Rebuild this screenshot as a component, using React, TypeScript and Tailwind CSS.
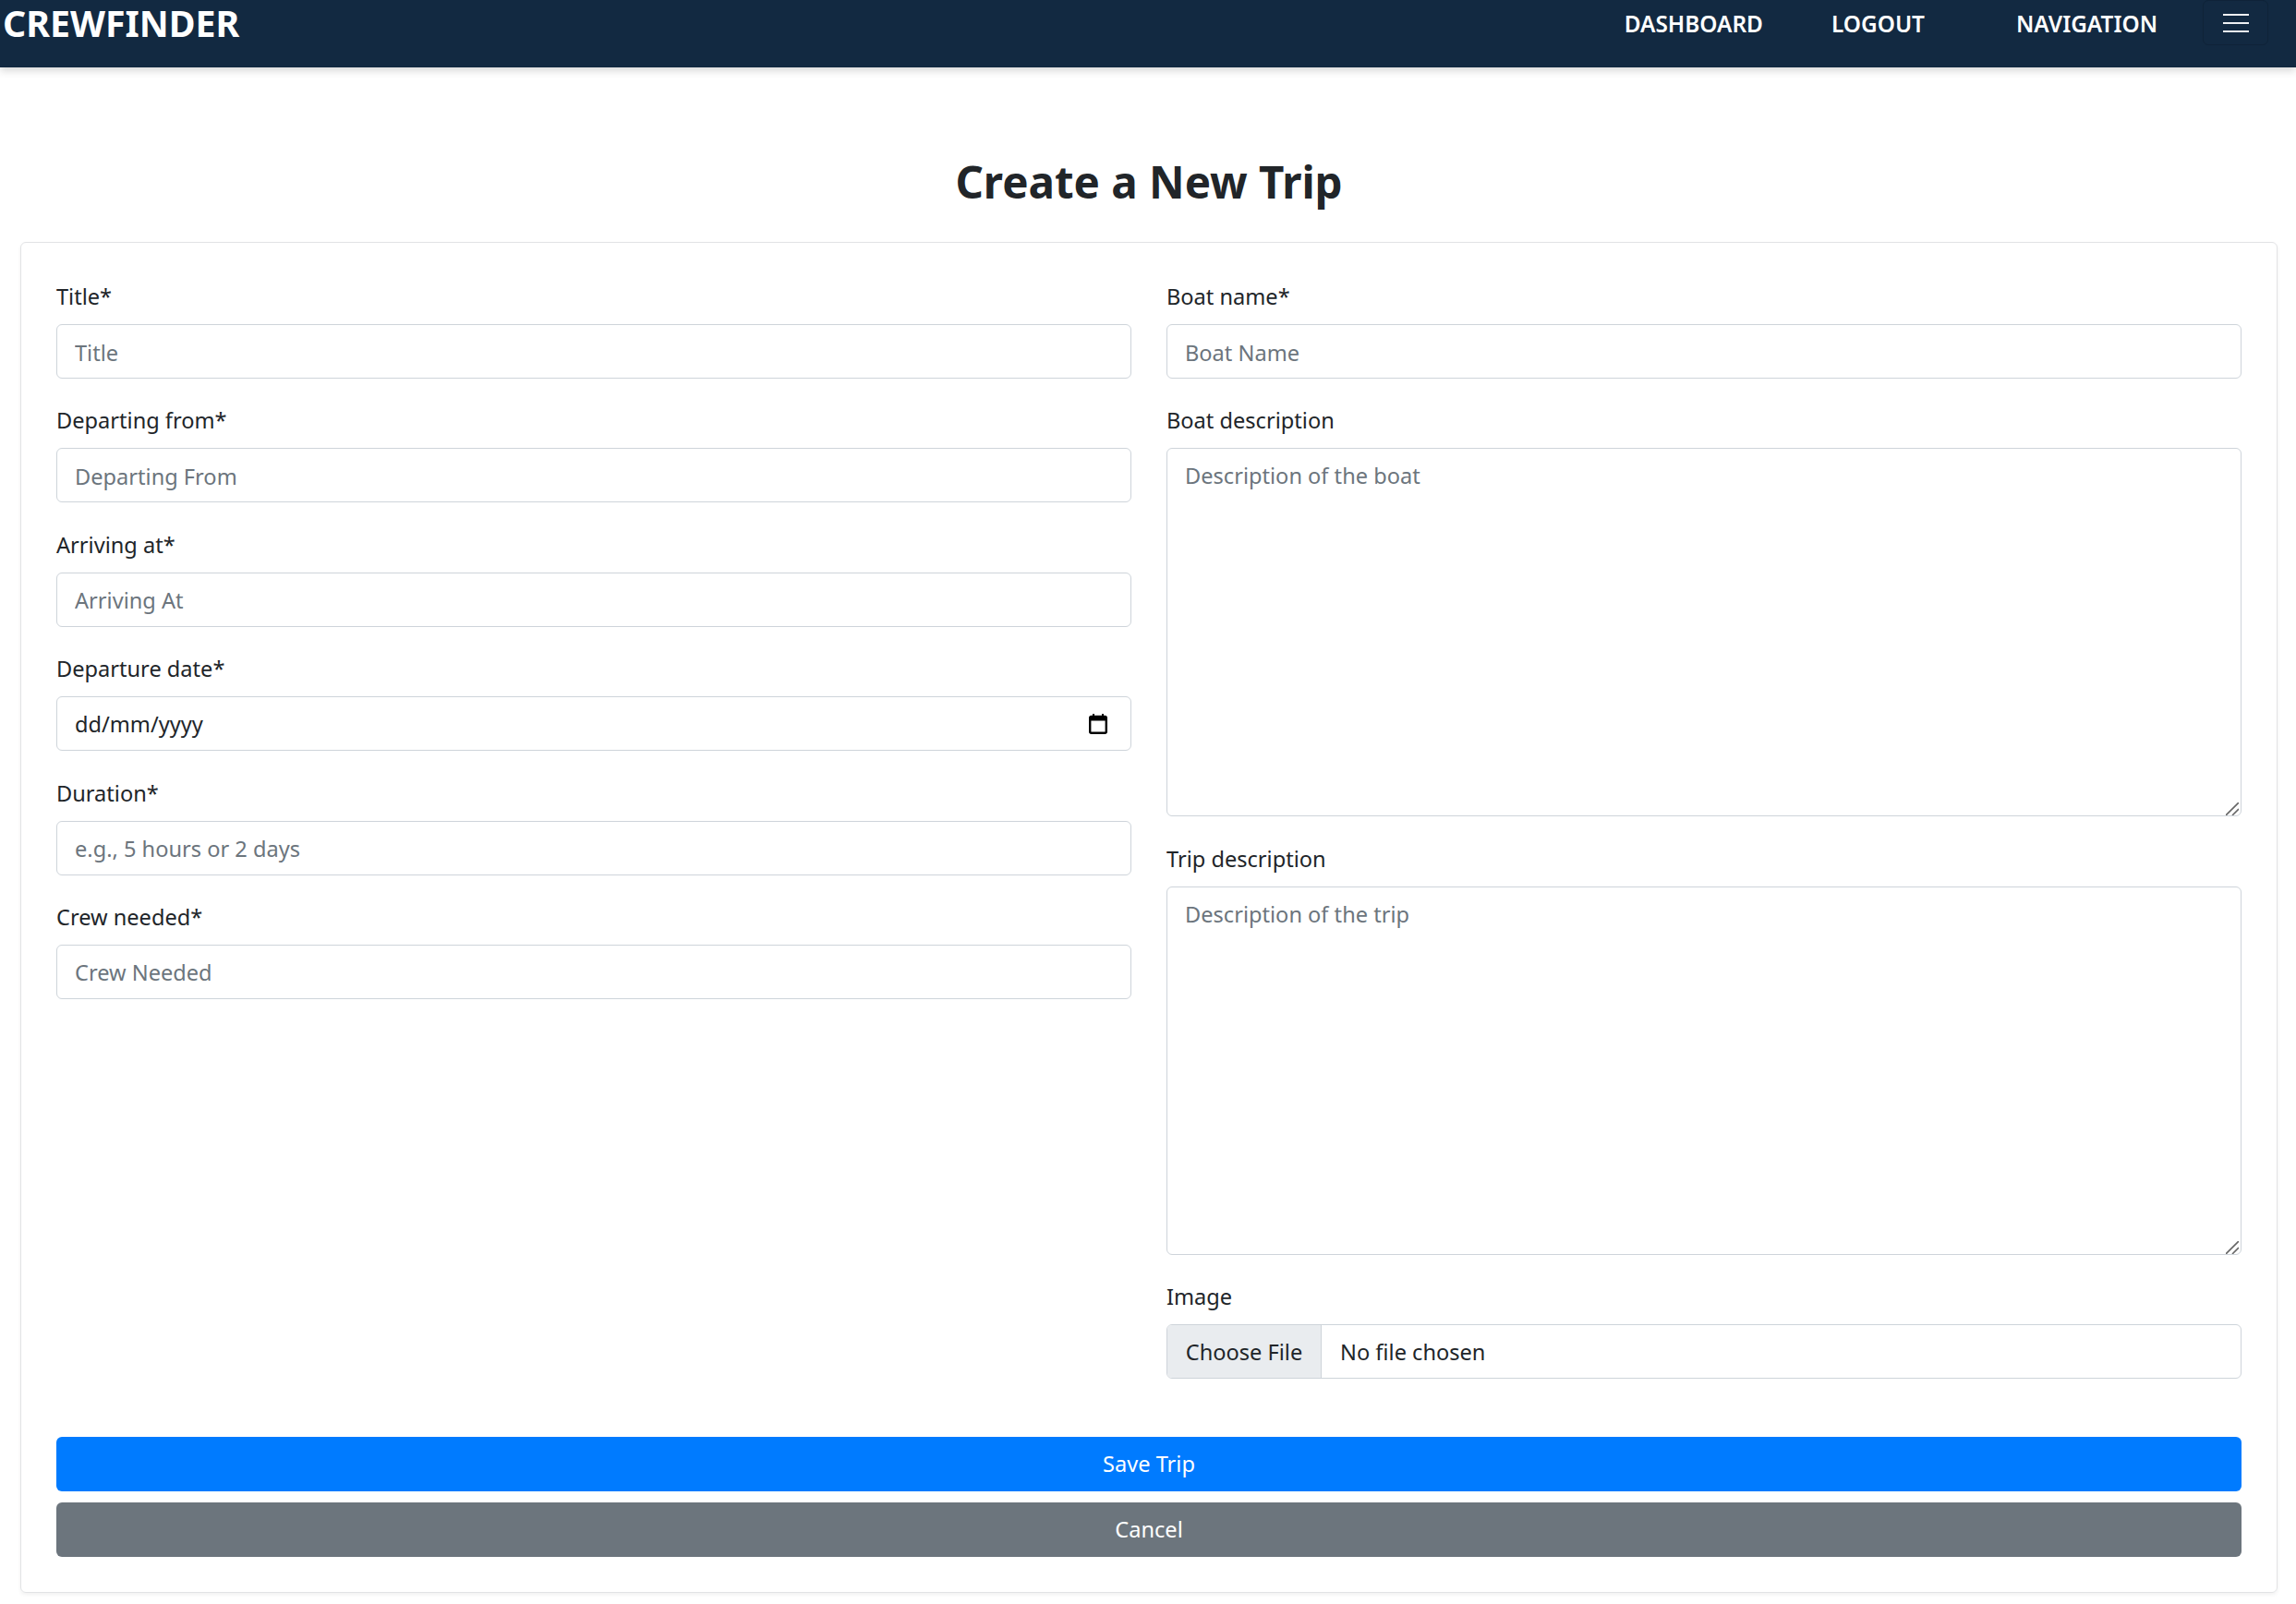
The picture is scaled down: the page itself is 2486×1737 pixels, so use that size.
const font = "font-['Noto_Sans','Open_Sans',sans-serif]";

const inputCls =
  "block w-full h-[59px] rounded-[6px] border border-[#ced4da] bg-white px-[19px] pt-[2px] text-[23.6px] text-[#212529] placeholder:text-[#6c757d] outline-none";
const labelCls = "block text-[23.6px] leading-[40px] text-[#212529] mb-[10px]";

function Field({ label, placeholder }: { label: string; placeholder: string }) {
  return (
    <div className="mb-[25.4px]">
      <label className={labelCls}>{label}</label>
      <input className={inputCls} placeholder={placeholder} />
    </div>
  );
}

function Area({ label, placeholder }: { label: string; placeholder: string }) {
  return (
    <div className="mb-[25.4px]">
      <label className={labelCls}>{label}</label>
      <div className="relative">
        <textarea
          className="block w-full h-[399px] resize-none rounded-[6px] border border-[#ced4da] bg-white px-[19px] py-[10px] text-[23.6px] leading-[38px] text-[#212529] placeholder:text-[#6c757d] outline-none"
          placeholder={placeholder}
        />
        {/* resize grip */}
        <svg className="absolute right-[3px] bottom-[1px]" width="14" height="14" viewBox="0 0 14 14">
          <path d="M0 14L14 0M7 14L14 7" stroke="#666" strokeWidth="1.6" />
        </svg>
      </div>
    </div>
  );
}

export default function App() {
  return (
    <div className={`${font} min-h-[1737px] bg-white`}>
      <nav className="h-[73px] bg-[#122941] shadow-[0_4px_8px_rgba(0,0,0,0.15)] flex items-start justify-between text-white">
        <div className="pl-[3px] text-[39.3px] leading-[50px] font-bold">CREWFINDER</div>
        <div className="flex items-center h-[49px] text-[24.4px] font-semibold">
          <span className="mt-[3px] mr-[74px]">DASHBOARD</span>
          <span className="mt-[3px] mr-[99px]">LOGOUT</span>
          <span className="mt-[3px] mr-[49px]">NAVIGATION</span>
          <button className="mr-[30px] flex h-[49px] w-[71px] items-center justify-center rounded-[6px] border border-[#0f2338]">
            <svg width="28" height="22" viewBox="0 0 28 22">
              <path d="M0 2h28M0 11h28M0 20h28" stroke="#eef0f3" strokeWidth="2" />
            </svg>
          </button>
        </div>
      </nav>
      <main className="pl-[22px] pr-[20px]">
        <h1 className="mt-[94px] mb-[35px] text-center text-[47.5px] leading-[60px] font-bold text-[#212529]">
          Create a New Trip
        </h1>
        <div className="rounded-[6px] border border-[#e2e3e5] shadow-[0_2px_4px_rgba(0,0,0,0.06)] p-[38px]">
          <div className="grid grid-cols-2 gap-x-[38px]">
            <div>
              <Field label="Title*" placeholder="Title" />
              <Field label="Departing from*" placeholder="Departing From" />
              <Field label="Arriving at*" placeholder="Arriving At" />
              <div className="mb-[25.4px]">
                <label className={labelCls}>Departure date*</label>
                <div className={`${inputCls} flex items-center justify-between`}>
                  <span>dd/mm/yyyy</span>
                  <svg width="20" height="22" viewBox="0 0 20 22" className="mr-[6px] mb-[2px]">
                    <path d="M5 0v3M15 0v3" stroke="#000" strokeWidth="2" />
                    <rect x="1.2" y="3" width="17.6" height="17.8" rx="1.5" fill="none" stroke="#000" strokeWidth="2.4" />
                    <path d="M1 2.5h18v5H1z" fill="#000" />
                  </svg>
                </div>
              </div>
              <Field label="Duration*" placeholder="e.g., 5 hours or 2 days" />
              <Field label="Crew needed*" placeholder="Crew Needed" />
            </div>
            <div>
              <Field label="Boat name*" placeholder="Boat Name" />
              <Area label="Boat description" placeholder="Description of the boat" />
              <Area label="Trip description" placeholder="Description of the trip" />
              <div className="mb-[25.4px]">
                <label className={labelCls}>Image</label>
                <div className="flex h-[59px] rounded-[6px] border border-[#ced4da] overflow-hidden text-[23.6px] text-[#212529]">
                  <div className="flex w-[167px] items-center justify-center pt-[2px] bg-[#e9ecef] border-r border-[#ced4da]">Choose File</div>
                  <div className="flex items-center px-[20px] pt-[2px]">No file chosen</div>
                </div>
              </div>
            </div>
          </div>
          <div className="mt-[37px] flex flex-col gap-[12px]">
            <button className="h-[59px] rounded-[6px] pt-[2px] bg-[#007bff] text-[23.6px] text-white">Save Trip</button>
            <button className="h-[59px] rounded-[6px] pt-[2px] bg-[#6c757d] text-[23.6px] text-white">Cancel</button>
          </div>
        </div>
      </main>
    </div>
  );
}
